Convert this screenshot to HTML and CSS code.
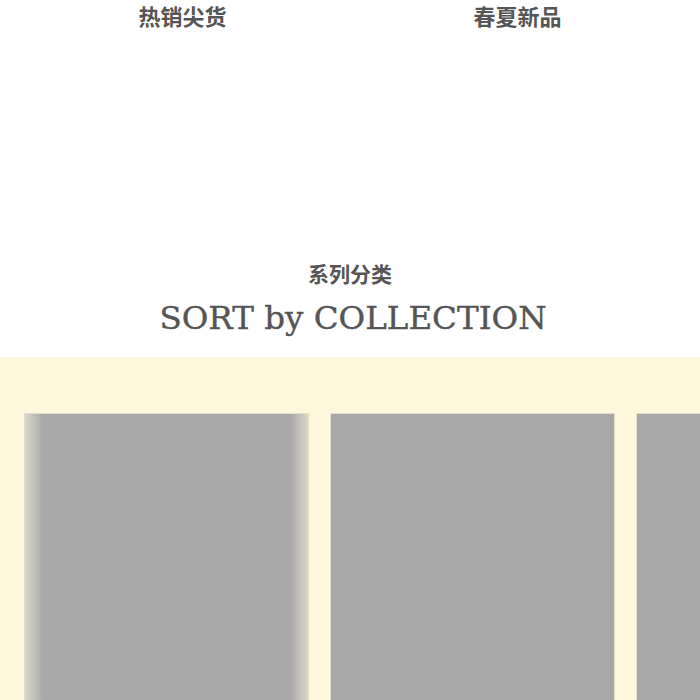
FILE: index.html
```html
<!DOCTYPE html>
<html lang="zh">
<head>
<meta charset="utf-8">
<link rel="stylesheet" href="styles.css">
</head>
<body>
<div class="top">
  <div class="tab">热销尖货</div>
  <div class="tab">春夏新品</div>
</div>
<div class="heading">
  <div class="cn">系列分类</div>
  <div class="en">SORT by COLLECTION</div>
</div>
<div class="band">
  <div class="track">
    <div class="card card-active"></div>
    <div class="card"></div>
    <div class="card"></div>
  </div>
</div>
</body>
</html>
```
FILE: styles.css
```css
html, body { margin: 0; padding: 0; background: #fff; overflow: hidden; }
body { width: 700px; height: 700px; }
.top {
  display: grid;
  grid-template-columns: 335px 335px;
  padding: 4px 15px 0;
  height: 220px;
  box-sizing: border-box;
}
.tab {
  text-align: center;
  font-family: "Noto Sans CJK SC", sans-serif;
  font-weight: 700;
  font-size: 22px;
  line-height: 22px;
  color: #555;
}
.heading {
  text-align: center;
  color: #555;
  padding-top: 40px;
  height: 137px;
  box-sizing: border-box;
}
.cn {
  font-family: "Noto Sans CJK SC", sans-serif;
  font-weight: 700;
  font-size: 21px;
  line-height: 26px;
}
.en {
  font-family: "DejaVu Serif", serif;
  font-size: 32.5px;
  line-height: 40px;
  margin-top: 12px;
  padding-left: 6px;
  -webkit-text-stroke: 0.4px #555;
}
.band {
  background: #fff7dc;
  height: 343px;
  padding-top: 56px;
  box-sizing: border-box;
  overflow: hidden;
}
.track {
  display: flex;
  gap: 21px;
  padding-left: 24px;
}
.card {
  flex: 0 0 285px;
  height: 300px;
  background: #a8a8a8;
  box-sizing: border-box;
  border: 1px solid #e4dfc8;
}
.card-active {
  background: linear-gradient(to right, #dcd8c8 0, #a8a8a8 18px, #a8a8a8 calc(100% - 18px), #dcd8c8 100%);
}
```
